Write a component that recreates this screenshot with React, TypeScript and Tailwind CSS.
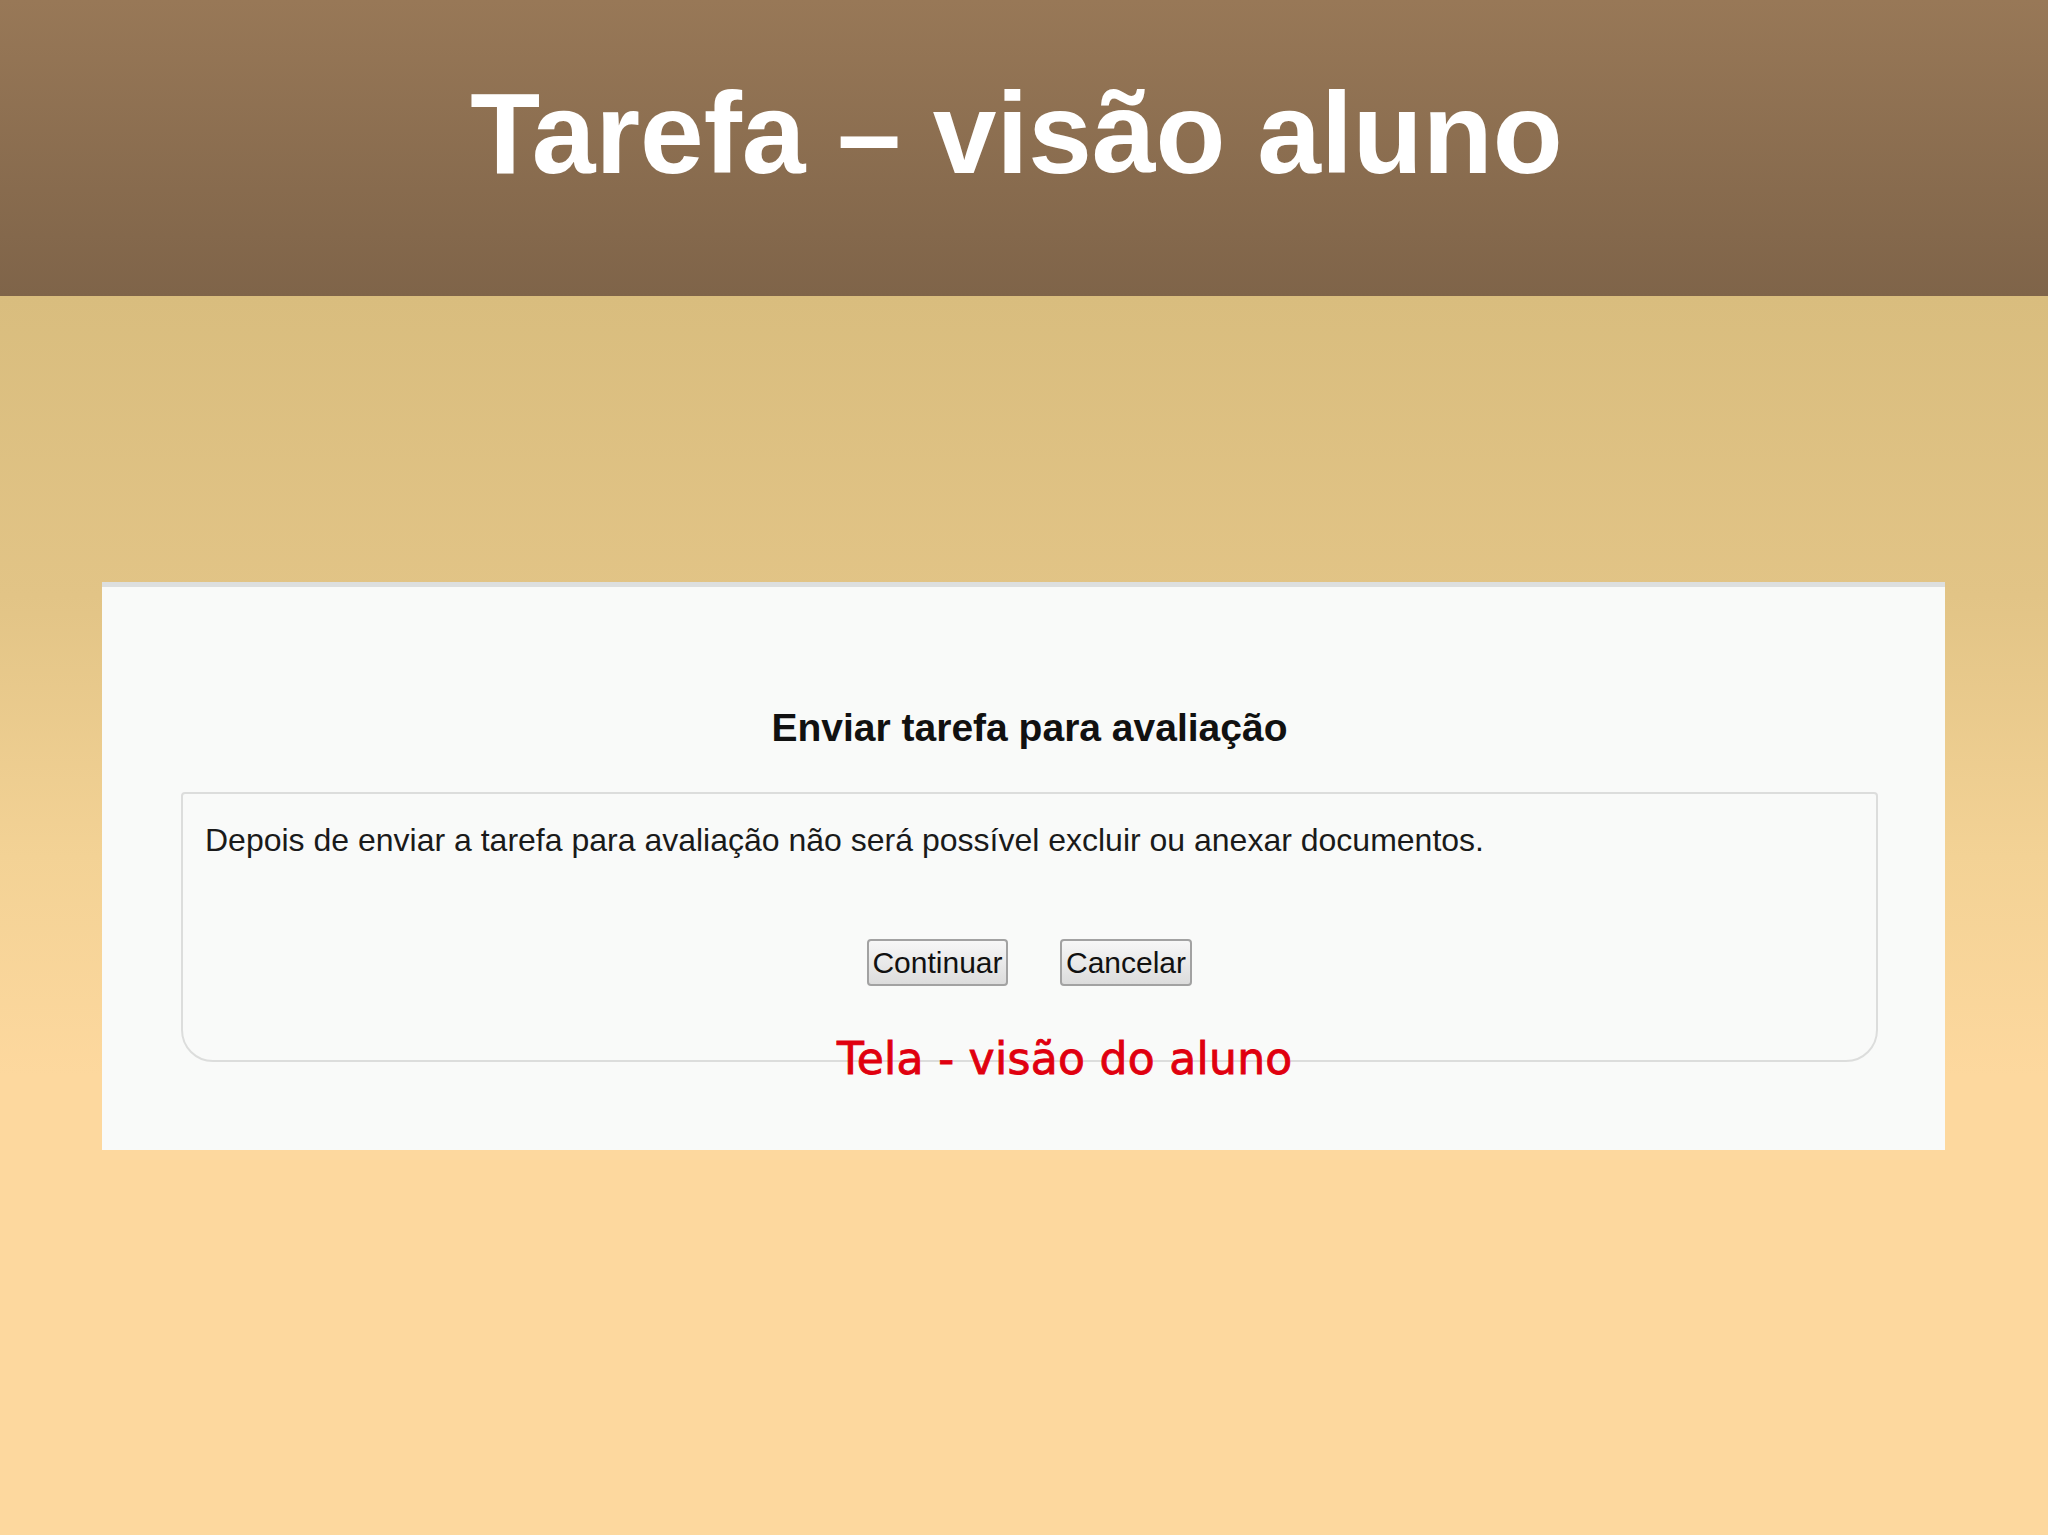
import React from "react";

export default function App() {
  return (
    <div className="flex h-[1535px] w-[2048px] flex-col font-['Liberation_Sans',Arial,sans-serif]">
      <header className="h-[296px] shrink-0 bg-gradient-to-b from-[#987857] to-[#7f6449] pt-[76px] pr-[15px] text-center">
        <h1 className="text-[114.5px] font-bold leading-none text-white">Tarefa – visão aluno</h1>
      </header>
      <main className="flex-1 bg-[linear-gradient(to_bottom,#d9bd7e_0px,#e2c486_300px,#f3d295_560px,#fdd89e_780px,#fdd89e_100%)] pt-[286px]">
        <div className="relative ml-[102px] h-[568px] w-[1843px] border-t-[5px] border-[#dddfdf] bg-[#f9faf9]">
          <h2 className="mt-[121px] pl-[79px] pr-[67px] text-center text-[39px] font-bold leading-none text-[#111]">
            Enviar tarefa para avaliação
          </h2>
          <div className="ml-[79px] mr-[67px] mt-[45px] rounded-t-[4px] rounded-b-[32px] border-2 border-[#dcdddc] pb-[74px] pl-[22px] pr-[22px] pt-[30px]">
            <p className="text-[32px] leading-none text-[#1a1a1a]">
              Depois de enviar a tarefa para avaliação não será possível excluir ou anexar documentos.
            </p>
            <div className="mt-[83px] flex justify-center gap-[52px]">
              <button className="flex h-[47px] w-[141px] items-center justify-center rounded-[4px] border-2 border-[#a2a2a2] bg-gradient-to-b from-[#f7f7f7] to-[#dcdcdc] text-[30px] leading-none text-[#111]">
                Continuar
              </button>
              <button className="flex h-[47px] w-[132px] items-center justify-center rounded-[4px] border-2 border-[#a2a2a2] bg-gradient-to-b from-[#f7f7f7] to-[#dcdcdc] text-[30px] leading-none text-[#111]">
                Cancelar
              </button>
            </div>
          </div>
          <div className="absolute left-[735px] top-[450px] whitespace-nowrap font-['DejaVu_Sans',sans-serif] text-[44px] leading-none tracking-[0.3px] text-[#e0000f] [-webkit-text-stroke:0.9px_#e0000f]">
            Tela - visão do aluno
          </div>
        </div>
      </main>
    </div>
  );
}
